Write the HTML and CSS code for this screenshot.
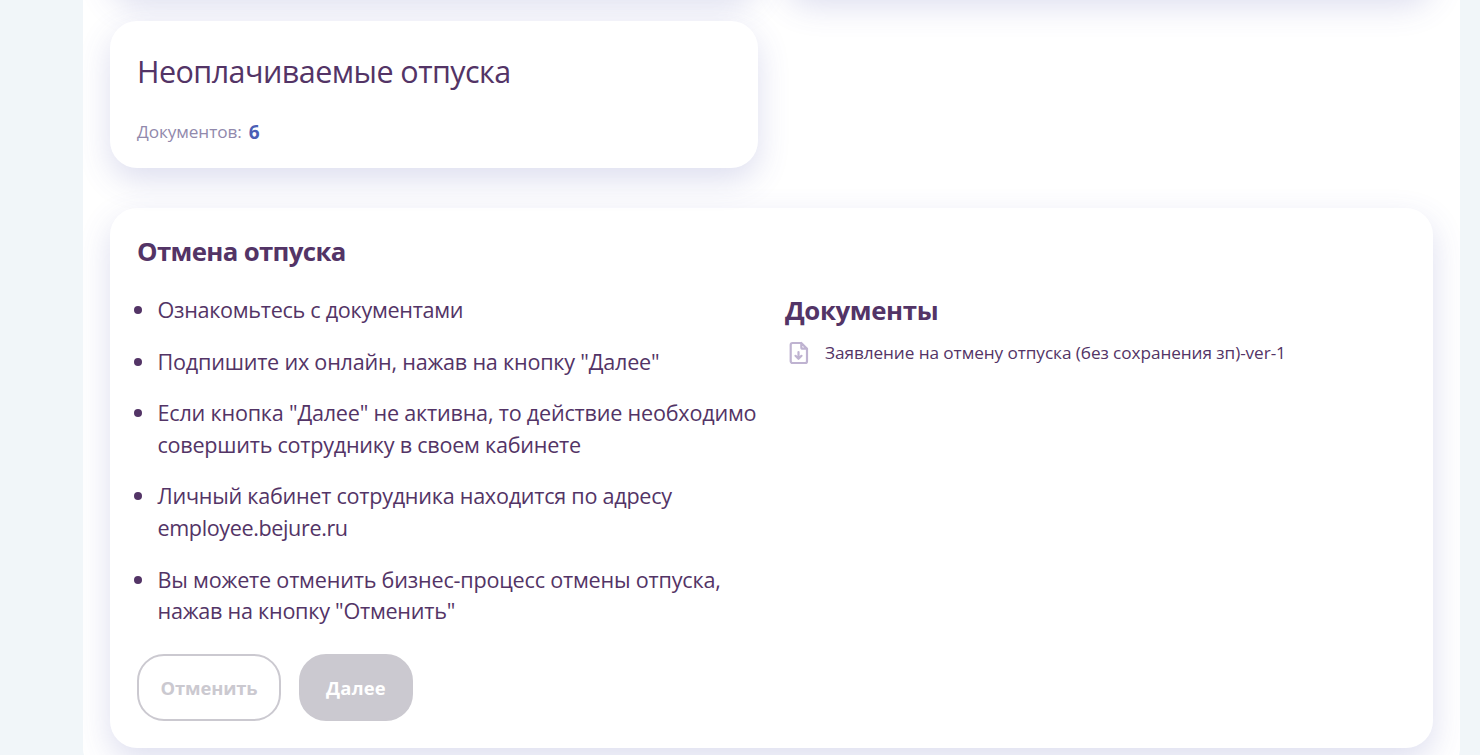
FILE: index.html
```html
<!DOCTYPE html>
<html lang="ru">
<head>
<meta charset="utf-8">
<title>Отпуска</title>
<link rel="stylesheet" href="styles.css">
</head>
<body>
<main class="page">
  <div class="cards">
    <div class="card card-prev"></div>
    <div class="card card-prev"></div>
    <section class="card summary">
      <h2 class="summary-title"><span>Неоплачиваемые отпуска</span></h2>
      <p class="summary-count"><span class="count-label">Документов:</span><b class="count-value">6</b></p>
    </section>
  </div>
  <section class="card process">
    <h3 class="heading heading-process"><span>Отмена отпуска</span></h3>
    <div class="columns">
      <ul class="steps">
        <li><span class="l1">Ознакомьтесь с документами</span></li>
        <li><span class="l2">Подпишите их онлайн, нажав на кнопку "Далее"</span></li>
        <li><span class="l3">Если кнопка "Далее" не активна, то действие необходимо</span><br><span class="l4">совершить сотруднику в своем кабинете</span></li>
        <li><span class="l5">Личный кабинет сотрудника находится по адресу</span><br><span class="l6">employee.bejure.ru</span></li>
        <li><span class="l7">Вы можете отменить бизнес-процесс отмены отпуска,</span><br><span class="l8">нажав на кнопку "Отменить"</span></li>
      </ul>
      <div class="docs">
        <h3 class="heading heading-docs"><span>Документы</span></h3>
        <div class="doc">
          <svg class="doc-icon" viewBox="0 0 20 24" fill="none" stroke="currentColor" stroke-width="2.2" stroke-linecap="round" stroke-linejoin="round">
            <path d="M12.3 2H3.5A1.8 1.8 0 0 0 1.7 3.8V20.2A1.8 1.8 0 0 0 3.5 22H16.2A1.8 1.8 0 0 0 18 20.2V7.7L12.3 2V6.2A1.5 1.5 0 0 0 13.8 7.7H18"/>
            <path d="M9.5 11V17.5M6.5 14.8L9.5 17.8L12.5 14.8"/>
          </svg>
          <span class="doc-name">Заявление на отмену отпуска (без сохранения зп)-ver-1</span>
        </div>
      </div>
    </div>
    <div class="actions">
      <button class="btn btn-outline" disabled><span>Отменить</span></button>
      <button class="btn btn-solid" disabled><span>Далее</span></button>
    </div>
  </section>
</main>
</body>
</html>
```
FILE: styles.css
```css
* { box-sizing: border-box; }
body {
  margin: 0;
  height: 755px;
  overflow: hidden;
  background: #f1f6f9;
  color: #533466;
  font-family: "Open Sans", "Noto Sans", sans-serif;
}
h2, h3, p, ul { margin: 0; padding: 0; font-weight: 400; }
span { white-space: nowrap; }
.page {
  width: 1377px;
  height: 775px;
  margin-left: 83px;
  padding: 0 27px;
  background: #fff;
  border-radius: 0 0 27px 27px;
  overflow: hidden;
}
.cards {
  display: grid;
  grid-template-columns: 648px 648px;
  grid-template-rows: 147px 147px;
  gap: 27px;
  margin-top: -153px;
}
.card {
  background: #fff;
  border-radius: 27px;
  box-shadow: 0 12px 32px rgba(76, 80, 170, 0.19);
}
.summary { padding: 27px 27px 0; }
.summary-title { font-size: 30.5px; line-height: 46px; letter-spacing: -0.55px; }
.summary-count {
  display: flex;
  align-items: center;
  gap: 7px;
  margin-top: 24px;
  line-height: 26px;
}
.count-label { color: #9189ac; font-size: 17.2px; letter-spacing: -0.08px; }
.count-value { padding-top: 1px; color: #4b5fb5; font-size: 19px; font-weight: 700; }
.process { height: 540px; margin-top: 40px; padding: 25px 27px; }
.heading { font-size: 25.8px; line-height: 36px; font-weight: 700; }
.heading-process { letter-spacing: -0.65px; }
.heading-docs { margin-top: -2px; letter-spacing: -0.38px; }
.columns {
  display: grid;
  grid-template-columns: 621px 1fr;
  gap: 27px;
  margin-top: 25px;
}
.steps {
  list-style: none;
  display: grid;
  row-gap: 20px;
  padding-left: 20.5px;
  font-size: 21.6px;
  line-height: 31.6px;
}
.l1 { letter-spacing: -0.29px; }
.l2 { letter-spacing: -0.22px; }
.l3 { letter-spacing: -0.21px; }
.l4 { letter-spacing: -0.25px; }
.l5 { letter-spacing: -0.26px; }
.l6 { letter-spacing: -0.39px; }
.l7 { letter-spacing: -0.2px; }
.l8 { letter-spacing: -0.25px; }
.steps li { position: relative; }
.steps li::before {
  content: "";
  position: absolute;
  left: -24px;
  top: 12px;
  width: 8px;
  height: 8px;
  border-radius: 50%;
  background: currentColor;
}
.doc { display: flex; align-items: center; height: 50px; padding-left: 4px; }
.doc-icon { width: 20px; height: 24px; color: #bfb3d1; }
.doc-name { margin-left: 16px; font-size: 17.2px; line-height: 24px; letter-spacing: -0.07px; }
.actions { display: flex; gap: 18px; margin-top: 27px; }
.btn {
  height: 67px;
  padding: 1px 0 0;
  border: 2px solid #cbc9d0;
  border-radius: 27px;
  font: 700 18.4px/26px "Open Sans", "Noto Sans", sans-serif;
}
.btn-outline { width: 144px; background: #fff; color: #cbc9d0; letter-spacing: -0.15px; }
.btn-solid { width: 114px; background: #cbc9d0; color: #fff; letter-spacing: 0.2px; }
```
